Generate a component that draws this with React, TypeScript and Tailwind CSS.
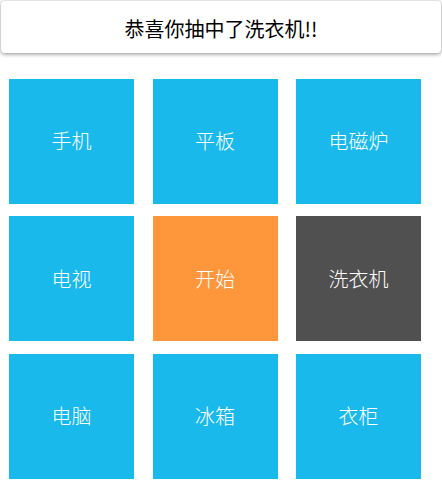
import React from "react";

const items = [
  { t: "手机", c: "bg-[#1ab9ec]" },
  { t: "平板", c: "bg-[#1ab9ec]" },
  { t: "电磁炉", c: "bg-[#1ab9ec]" },
  { t: "电视", c: "bg-[#1ab9ec]" },
  { t: "开始", c: "bg-[#fe963b]" },
  { t: "洗衣机", c: "bg-[#505050]" },
  { t: "电脑", c: "bg-[#1ab9ec]" },
  { t: "冰箱", c: "bg-[#1ab9ec]" },
  { t: "衣柜", c: "bg-[#1ab9ec]" },
];

export default function App() {
  return (
    <div
      className="w-[442px] h-[482px] bg-white"
      style={{ fontFamily: '"Noto Sans CJK SC", "Noto Sans", sans-serif' }}
    >
      <div className="pt-[1px] px-[1px]">
        <div className="h-[52px] rounded-[4px] bg-white shadow-[0_1px_4px_rgba(0,0,0,0.45)] flex items-center justify-center text-[20px] text-black leading-none pt-[3px]">
          恭喜你抽中了洗衣机!!
        </div>
      </div>
      <div className="mt-[25.5px] ml-[9px] grid grid-cols-[125px_125px_125px] gap-x-[18.5px] gap-y-[12.5px]">
        {items.map((it) => (
          <div
            key={it.t}
            className={`${it.c} h-[125px] flex items-center justify-center text-white text-[20px] font-light`}
          >
            {it.t}
          </div>
        ))}
      </div>
    </div>
  );
}
